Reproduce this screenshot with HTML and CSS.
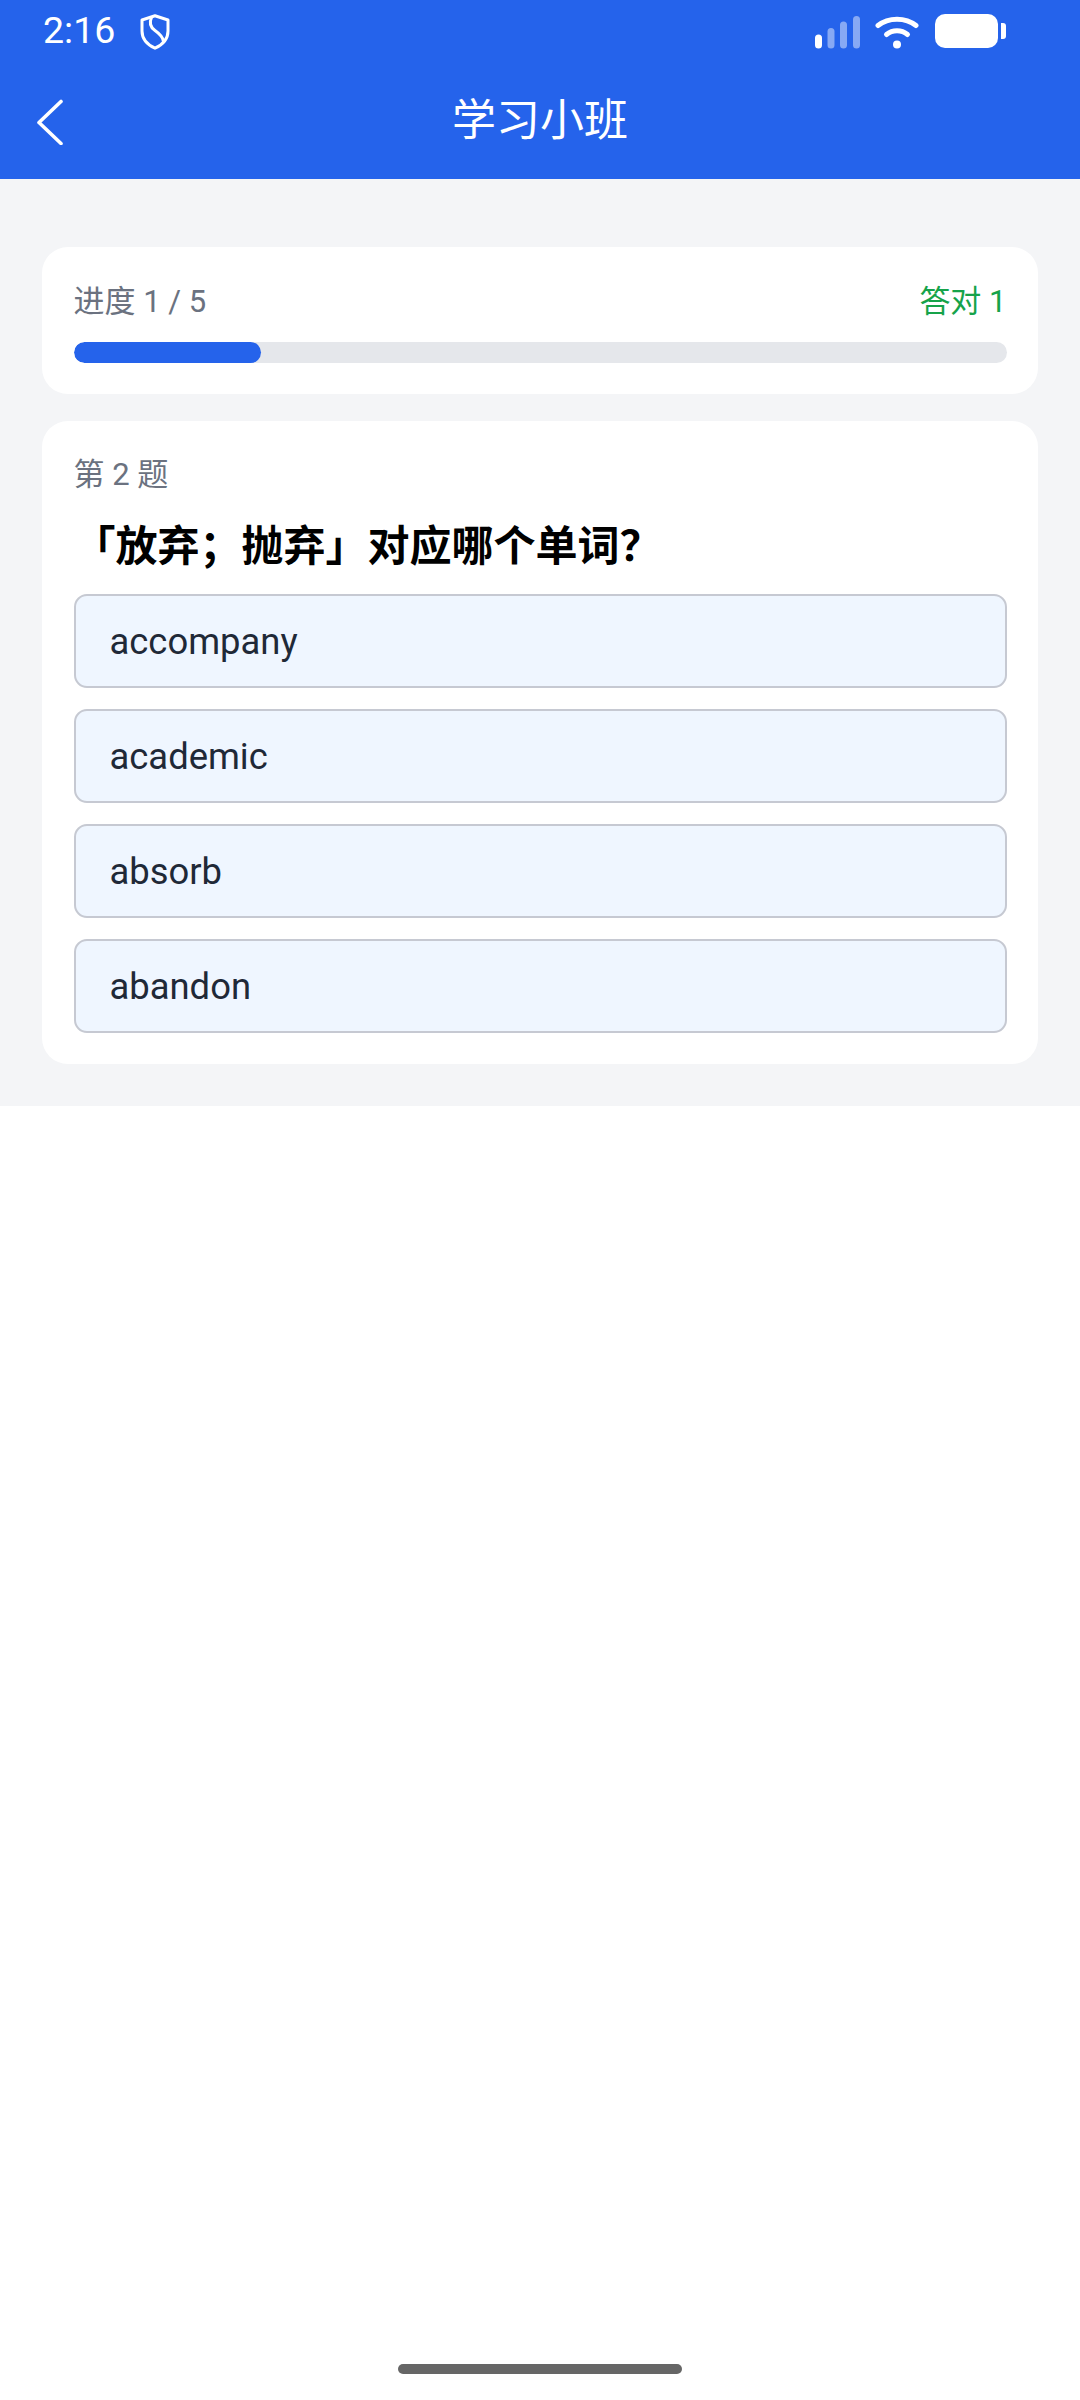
FILE: index.html
```html
<!DOCTYPE html>
<html lang="zh">
<head>
<meta charset="utf-8">
<title>学习小班</title>
<link rel="stylesheet" href="styles.css">
</head>
<body>
<div class="page">
  <header class="header">
    <div class="status">
      <span class="time">2:16</span>
      <svg class="shield" viewBox="0 0 30 36" width="30" height="36" fill="none" stroke="#fff" stroke-width="3" stroke-linejoin="round" stroke-linecap="round">
        <path d="M15 1.800 L28 6 V17 C28 25 22 31 15 34.200 C8 31 2 25 2 17 V6 Z"/>
        <path d="M11.500 3.500 C9 9 10 13 15 16.500 C20 20 23 23 23.500 27.500"/>
      </svg>
      <span class="status-gap"></span>
      <svg class="signal" viewBox="0 0 46 33" width="46" height="33">
        <rect x="0" y="18.500" width="7" height="14" rx="3.500" fill="#fff"/>
        <rect x="12.500" y="12" width="7" height="20.500" rx="3.500" fill="#fff" fill-opacity=".45"/>
        <rect x="25" y="5.500" width="7" height="27" rx="3.500" fill="#fff" fill-opacity=".45"/>
        <rect x="38" y="0" width="7" height="32.500" rx="3.500" fill="#fff" fill-opacity=".45"/>
      </svg>
      <svg class="wifi" viewBox="0 0 44 33" width="44" height="33" fill="none" stroke="#fff" stroke-width="5" stroke-linecap="round">
        <path d="M3 9.500 C13.500 1 30.500 1 41 9.500"/>
        <path d="M11.500 18.500 C17.500 13.500 26.500 13.500 32.500 18.500"/>
        <circle cx="22" cy="28.500" r="4" fill="#fff" stroke="none"/>
      </svg>
      <svg class="battery" viewBox="0 0 71 34" width="71" height="34">
        <rect x="0" y="0" width="63" height="34" rx="10" fill="#fff"/>
        <path d="M66 9 h2 a3 3 0 0 1 3 3 v10 a3 3 0 0 1 -3 3 h-2 Z" fill="#fff"/>
      </svg>
    </div>
    <div class="toolbar">
      <svg class="back" viewBox="0 0 28 46" width="28" height="46" fill="none" stroke="#fff" stroke-width="3.600" stroke-linecap="round" stroke-linejoin="round">
        <path d="M25 2.500 L3 23.500 L25 44.500"/>
      </svg>
      <h1 class="title">学习小班</h1>
    </div>
  </header>
  <main class="content">
    <section class="card progress-card">
      <div class="progress-row">
        <span class="progress-label">进度 1 / 5</span>
        <span class="correct">答对 1</span>
      </div>
      <div class="track"><div class="fill"></div></div>
    </section>
    <section class="card question-card">
      <div class="q-num">第 2 题</div>
      <h2 class="q-text">「放弃；抛弃」对应哪个单词？</h2>
      <div class="options">
        <div class="option">accompany</div>
        <div class="option">academic</div>
        <div class="option">absorb</div>
        <div class="option">abandon</div>
      </div>
    </section>
  </main>
  <div class="home-bar"></div>
</div>
</body>
</html>
```
FILE: styles.css
```css
* { box-sizing: border-box; }
html, body { margin: 0; padding: 0; background: #fff; }
body { font-family: Roboto, "Noto Sans CJK SC", sans-serif; }
.page { width: 1080px; height: 2400px; display: flex; flex-direction: column; }
.header { background: #2563eb; height: 179px; color: #fff; flex: none; }
.status { height: 62px; display: flex; align-items: center; padding: 0 74px 0 43px; }
.time { font-size: 37.500px; line-height: 1; width: 97px; }
.shield { margin-top: 1px; }
.status-gap { flex: 1; }
.signal { margin-top: 2px; margin-right: -1px; }
.wifi { margin: 2px 0 0 15px; }
.battery { margin: 0 0 0 16px; }
.toolbar { height: 117px; display: flex; align-items: center; position: relative; padding-left: 36px; }
.back { margin-top: 3px; }
.title { position: absolute; left: 0; right: 0; margin: 0; text-align: center; font-size: 44px; font-weight: 400; line-height: 1; }
.content { background: #f4f5f7; height: 927px; padding: 68px 42px 0; flex: none; display: flex; flex-direction: column; gap: 27px; }
.card { background: #fff; border-radius: 26px; padding: 0 31.500px; }
.progress-card { height: 147px; padding-top: 30px; }
.progress-row { display: flex; justify-content: space-between; align-items: center; height: 42px; }
.progress-label { font-size: 31px; color: #6b7280; }
.correct { font-size: 31px; color: #16a34a; }
.track { height: 21px; margin-top: 23px; border-radius: 10.500px; background: #e5e7eb; overflow: hidden; }
.fill { width: 20.100%; height: 100%; border-radius: 10.500px; background: #2563eb; }
.question-card { height: 643px; padding-top: 33px; }
.q-num { font-size: 31px; color: #6b7280; line-height: 42px; }
.q-text { margin: 23px 0 0; font-size: 42px; font-weight: 700; line-height: 55px; color: #000; }
.options { display: flex; flex-direction: column; gap: 21px; margin-top: 20px; }
.option { height: 94px; background: #eff6ff; border: 2px solid #c6c9d2; border-radius: 13px; padding-left: 34px; font-size: 36.400px; line-height: 92px; color: #1f2937; }
.home-bar { width: 284px; height: 10px; border-radius: 5px; background: #666; margin: auto auto 26px; flex: none; }
```
